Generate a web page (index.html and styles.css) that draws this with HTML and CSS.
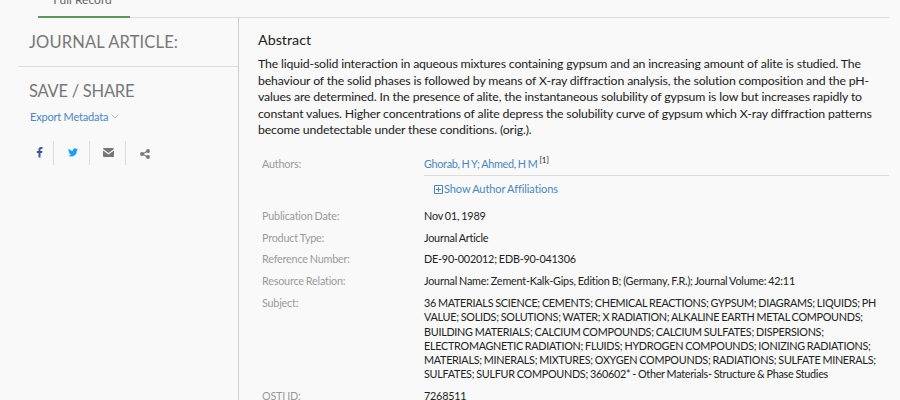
FILE: index.html
```html
<!DOCTYPE html>
<html lang="en">
<head>
    <meta charset="UTF-8">
    <meta name="viewport" content="width=device-width, initial-scale=1.0">
    <title>Journal Article</title>
    <link rel="stylesheet" href="styles.css">
</head>
<body>
    <nav class="tabs">
        <a class="tab active" href="#">Full Record</a>
    </nav>
    <div class="page">
        <aside class="sidebar">
            <h2 class="doc-type">JOURNAL ARTICLE:</h2>
            <section class="share">
                <h2>SAVE / SHARE</h2>
                <a class="export" href="#">Export Metadata
                    <svg width="8" height="5" viewBox="0 0 8 5"><path d="M.8 .8L4 4 7.200.8" fill="none" stroke="#bbb"/></svg>
                </a>
                <div class="icons">
                    <a href="#"><svg width="7" height="11" viewBox="0 0 7 11"><path fill="#3b5998" d="M6.500.1v1.800h-1c-.8 0-1 .4-1 .9v1.300h1.900L6.100 6H4.500v4.500h-2V6H.8V4.100h1.700V2.600C2.500.9 3.500 0 5 0z"/></svg></a>
                    <a href="#"><svg width="10" height="9" viewBox="0 0 24 20"><path fill="#1da1f2" d="M24 2.400a10 10 0 0 1-2.800.8A5 5 0 0 0 23.300.4a10 10 0 0 1-3.100 1.200 4.900 4.900 0 0 0-8.400 4.500A14 14 0 0 1 1.700.9a4.900 4.900 0 0 0 1.500 6.600 5 5 0 0 1-2.200-.6 4.900 4.900 0 0 0 3.900 4.900 5 5 0 0 1-2.200.1 4.900 4.900 0 0 0 4.600 3.400A10 10 0 0 1 0 17.300 14 14 0 0 0 21.500 4.900 10 10 0 0 0 24 2.400z"/></svg></a>
                    <a href="#"><svg width="11" height="9" viewBox="0 0 11 9"><path fill="#777" d="M1 0h9a1 1 0 0 1 1 1L5.500 5 0 1a1 1 0 0 1 1-1zM0 2.400l5.500 4 5.500-4V8a1 1 0 0 1-1 1H1a1 1 0 0 1-1-1z"/></svg></a>
                    <a href="#"><svg width="10" height="10" viewBox="0 0 10 10"><path d="M8 2L2 5l6 3" fill="none" stroke="#777" stroke-width="1.200"/><g fill="#777"><circle cx="8" cy="2" r="1.900"/><circle cx="2" cy="5" r="1.900"/><circle cx="8" cy="8" r="1.900"/></g></svg></a>
                </div>
            </section>
        </aside>
        <main class="record">
            <h1>Abstract</h1>
            <p class="abstract">The liquid-solid interaction in aqueous mixtures containing gypsum and an increasing amount of alite is studied. The<br>behaviour of the solid phases is followed by means of X-ray diffraction analysis, the solution composition and the pH-<br>values are determined. In the presence of alite, the instantaneous solubility of gypsum is low but increases rapidly to<br>constant values. Higher concentrations of alite depress the solubility curve of gypsum which X-ray diffraction patterns<br>become undetectable under these conditions. (orig.).</p>
            <dl class="details">
                <dt>Authors:</dt>
                <dd class="authors">
                    <div class="names"><a href="#">Ghorab, H Y; </a><a href="#">Ahmed, H M</a> <sup>[1]</sup></div>
                    <a class="affiliations" href="#"><svg width="9" height="9" viewBox="0 0 9 9"><path d="M.5.5h8v8h-8zM4.500 2v5M2 4.500h5" fill="none" stroke="#4a86bf"/></svg>Show Author Affiliations</a>
                </dd>
                <dt>Publication Date:</dt>
                <dd>Nov 01, 1989</dd>
                <dt>Product Type:</dt>
                <dd>Journal Article</dd>
                <dt>Reference Number:</dt>
                <dd>DE-90-002012; EDB-90-041306</dd>
                <dt>Resource Relation:</dt>
                <dd>Journal Name: Zement-Kalk-Gips, Edition B; (Germany, F.R.); Journal Volume: 42:11</dd>
                <dt>Subject:</dt>
                <dd class="subject">36 MATERIALS SCIENCE; CEMENTS; CHEMICAL REACTIONS; GYPSUM; DIAGRAMS; LIQUIDS; PH<br>VALUE; SOLIDS; SOLUTIONS; WATER; X RADIATION; ALKALINE EARTH METAL COMPOUNDS;<br>BUILDING MATERIALS; CALCIUM COMPOUNDS; CALCIUM SULFATES; DISPERSIONS;<br>ELECTROMAGNETIC RADIATION; FLUIDS; HYDROGEN COMPOUNDS; IONIZING RADIATIONS;<br>MATERIALS; MINERALS; MIXTURES; OXYGEN COMPOUNDS; RADIATIONS; SULFATE MINERALS;<br>SULFATES; SULFUR COMPOUNDS; 360602* - Other Materials- Structure &amp; Phase Studies</dd>
                <dt>OSTI ID:</dt>
                <dd>7268511</dd>
            </dl>
        </main>
    </div>
</body>
</html>
```

FILE: styles.css
```css
* {
    box-sizing: border-box;
}
body {
    margin: 0;
    height: 400px;
    overflow: hidden;
    background: #f9f9f9;
    color: #212121;
    font-family: Lato, sans-serif;
    font-size: 11px;
    font-variant-ligatures: none;
}
a {
    color: #4a86bf;
    text-decoration: none;
}
h1, h2, p, dl, dd {
    margin: 0;
    font-weight: normal;
}
.tabs {
    height: 18px;
    margin: 0 11px 0 38px;
    border-bottom: 1px solid #ddd;
}
.tab {
    display: flex;
    align-items: flex-end;
    justify-content: center;
    width: 92px;
    height: 18px;
    padding: 0 3px 8px 0;
    border-bottom: 2px solid #5c9a5c;
    color: #666;
    font-size: 12px;
    line-height: 16px;
}
.page {
    display: flex;
}
.sidebar {
    flex: none;
    width: 221px;
    margin-left: 18px;
    height: 382px;
    border-right: 1px solid #ccc;
}
.sidebar h2 {
    color: #777;
    font-size: 16.500px;
    line-height: 20px;
    letter-spacing: -0.250px;
}
.sidebar .doc-type {
    height: 49px;
    padding: 14px 11px;
    border-bottom: 1px solid #ddd;
    letter-spacing: 0.150px;
}
.share {
    padding: 14px 11px;
}
.export {
    display: block;
    margin: 9px 0 0 1px;
    font-size: 11px;
    line-height: 14px;
    letter-spacing: -0.200px;
}
.export svg {
    vertical-align: 2px;
}
.icons {
    display: flex;
    margin-top: 17px;
}
.icons a {
    display: flex;
    align-items: center;
    justify-content: center;
    width: 36px;
    height: 24px;
    border-right: 1px solid #ddd;
}
.icons a:first-child {
    width: 25px;
    padding: 0 4px 2px 0;
}
.icons a:nth-child(2) {
    padding: 0 0 2px 3px;
}
.icons a:nth-child(3) {
    padding: 0 0 2px 2px;
}
.icons a:last-child {
    padding: 1px 0 0 2px;
    border-right: 0;
}
.record {
    flex: 1;
    padding: 12px 11px 0 19px;
}
.record h1 {
    font-size: 14.300px;
    line-height: 20px;
}
.abstract {
    margin-top: 6px;
    font-size: 12.300px;
    line-height: 16.600px;
    letter-spacing: -0.155px;
    white-space: nowrap;
}
.details {
    display: grid;
    grid-template-columns: 162px 1fr;
    row-gap: 7.500px;
    margin: 18px 0 0 4px;
    font-size: 10.800px;
    line-height: 14.300px;
    letter-spacing: -0.200px;
    word-spacing: -0.500px;
    white-space: nowrap;
}
dt {
    color: #999;
}
.subject {
    letter-spacing: -0.270px;
}
.names {
    height: 19px;
    border-bottom: 1px solid #ddd;
    letter-spacing: -0.300px;
}
sup {
    font-size: 8px;
    line-height: 0;
    letter-spacing: 0;
}
.affiliations {
    display: block;
    padding: 6px 0 5px 10px;
    font-size: 11px;
    letter-spacing: -0.080px;
}
.affiliations svg {
    margin-right: 1px;
    vertical-align: -1px;
}
```
